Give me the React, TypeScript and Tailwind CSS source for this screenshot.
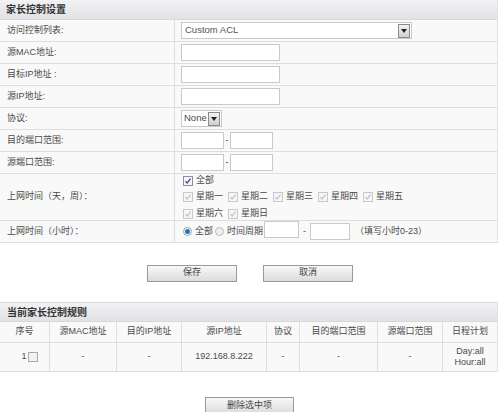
const cjk = "font-['Liberation_Sans','Noto_Sans_CJK_SC',sans-serif]";

function Arrow() {
  return (
    <span className="flex h-[14px] w-[12px] items-center justify-center border border-[#8a8a8a] bg-gradient-to-b from-[#f4f4f4] to-[#cfcfcf]">
      <svg width="6" height="4" viewBox="0 0 6 4">
        <path d="M0 0H6L3 4Z" fill="#222" />
      </svg>
    </span>
  );
}

function Box({ w }: { w: string }) {
  return <span className={`inline-block h-[17px] ${w} border border-[#c9c9c9] bg-white`} />;
}

function Check({ on }: { on?: boolean }) {
  return (
    <span className={`flex h-[10px] w-[10px] items-center justify-center border ${on ? "border-[#8e8e9e]" : "border-[#c8c8c8]"} bg-[#f6f6f6]`}>
      <svg width="8" height="8" viewBox="0 0 8 8">
        <path d="M1.5 4.2L3.2 6L6.6 1.6" fill="none" stroke={on ? "#3b4aa8" : "#c4c4c4"} strokeWidth="1.3" />
      </svg>
    </span>
  );
}

function Row({ label, h = "h-[22px]", children }: { label: string; h?: string; children: React.ReactNode }) {
  return (
    <div className={`flex ${h} border-b border-[#dedede] bg-[#f9f9f9]`}>
      <div className="flex w-[175px] items-center border-r border-[#dedede] pl-[7px]">{label}</div>
      <div className="flex flex-1 items-center pl-[6px]">{children}</div>
    </div>
  );
}

function Btn({ text, w }: { text: string; w: string }) {
  return (
    <div className={`flex h-[17px] ${w} items-center justify-center border border-[#9a9a9a] bg-gradient-to-b from-[#f8f8f8] to-[#dcdcdc] text-[#444]`}>
      {text}
    </div>
  );
}

const days = ["星期一", "星期二", "星期三", "星期四", "星期五"];
const cols = [
  ["序号", "w-[50px]"],
  ["源MAC地址", "w-[67px]"],
  ["目的IP地址", "w-[65px]"],
  ["源IP地址", "w-[85px]"],
  ["协议", "w-[33px]"],
  ["目的端口范围", "w-[78px]"],
  ["源端口范围", "w-[65px]"],
  ["日程计划", "flex-1"],
];

export default function App() {
  return (
    <div className={`h-[412px] w-[500px] overflow-hidden bg-white text-[9px] text-[#4a4a4a] ${cjk}`}>
      <div className="w-[498px] border-r border-[#e2e2e2]">
        <div className="flex h-[20px] items-center border-b border-[#d8d8d8] bg-gradient-to-b from-[#f2f2f4] to-[#e2e2e6] pl-[6px] text-[10px] font-bold text-[#333]">
          家长控制设置
        </div>
        <Row label="访问控制列表:">
          <div className="flex h-[17px] w-[231px] items-center justify-between border border-[#c9c9c9] bg-white pl-[3px] pr-[1px] text-[9.5px] text-[#555]">
            Custom ACL
            <Arrow />
          </div>
        </Row>
        <Row label="源MAC地址:">
          <Box w="w-[99px]" />
        </Row>
        <Row label="目标IP地址 :">
          <Box w="w-[99px]" />
        </Row>
        <Row label="源IP地址:">
          <Box w="w-[99px]" />
        </Row>
        <Row label="协议:">
          <div className="flex h-[17px] w-[41px] items-center justify-between border border-[#c9c9c9] bg-white pl-[2px] pr-[1px] text-[9.5px]">
            None
            <Arrow />
          </div>
        </Row>
        <Row label="目的端口范围:">
          <Box w="w-[43px]" />
          <span className="w-[6px] text-center">-</span>
          <Box w="w-[43px]" />
        </Row>
        <Row label="源端口范围:">
          <Box w="w-[43px]" />
          <span className="w-[6px] text-center">-</span>
          <Box w="w-[43px]" />
        </Row>
        <Row label="上网时间（天，周）：" h="h-[47px]">
          <div className="flex flex-col gap-[3px] pl-[2px]">
            <div className="flex items-center gap-[3px]">
              <Check on />
              全部
            </div>
            <div className="flex items-center">
              {days.map((d) => (
                <span key={d} className="mr-[5px] flex items-center gap-[3px]">
                  <Check />
                  {d}
                </span>
              ))}
            </div>
            <div className="flex items-center">
              {["星期六", "星期日"].map((d) => (
                <span key={d} className="mr-[5px] flex items-center gap-[3px]">
                  <Check />
                  {d}
                </span>
              ))}
            </div>
          </div>
        </Row>
        <Row label="上网时间（小时）：">
          <span className="ml-[2px] mr-[3px] flex h-[9px] w-[9px] items-center justify-center rounded-full border border-[#8aa] bg-white">
            <span className="h-[5px] w-[5px] rounded-full bg-[#2a6fb8]" />
          </span>
          全部
          <span className="ml-[2px] mr-[3px] h-[9px] w-[9px] rounded-full border border-[#bbb] bg-[#eee]" />
          时间周期
          <span className="ml-[1px]">
            <Box w="w-[35px]" />
          </span>
          <span className="w-[11px] text-center">-</span>
          <Box w="w-[40px]" />
          <span className="ml-[5px]">（填写小时0-23）</span>
        </Row>
      </div>

      <div className="flex h-[59px] items-center gap-[26px] pl-[147px] pt-[1px]">
        <Btn text="保存" w="w-[90px]" />
        <Btn text="取消" w="w-[90px]" />
      </div>

      <div className="w-[498px] border-r border-[#e2e2e2]">
        <div className="flex h-[20px] items-center border-y border-[#d8d8d8] bg-gradient-to-b from-[#f2f2f4] to-[#e2e2e6] pl-[7px] text-[10px] font-bold text-[#333]">
          当前家长控制规则
        </div>
        <div className="flex h-[21px] border-b border-[#dedede] bg-[#f9f9f9]">
          {cols.map(([t, w], i) => (
            <div key={t} className={`flex ${w} items-center justify-center ${i < 7 ? "border-r border-[#dedede]" : ""}`}>
              {t}
            </div>
          ))}
        </div>
        <div className="flex h-[29px] border-b border-[#dedede] bg-[#f9f9f9]">
          {cols.map(([t, w], i) => (
            <div key={t} className={`flex ${w} flex-col items-center justify-center ${i < 7 ? "border-r border-[#dedede]" : ""}`}>
              {i === 0 ? (
                <span className="flex items-center gap-[1px] pl-[10px]">
                  1
                  <span className="h-[10px] w-[10px] border border-[#aaa] bg-[#f2f2f2]" />
                </span>
              ) : i === 3 ? (
                "192.168.8.222"
              ) : i === 7 ? (
                <>
                  <span className="leading-[11px]">Day:all</span>
                  <span className="leading-[11px]">Hour:all</span>
                </>
              ) : (
                "-"
              )}
            </div>
          ))}
        </div>
      </div>

      <div className="flex pl-[205px] pt-[25px]">
        <Btn text="删除选中项" w="w-[89px]" />
      </div>
    </div>
  );
}
